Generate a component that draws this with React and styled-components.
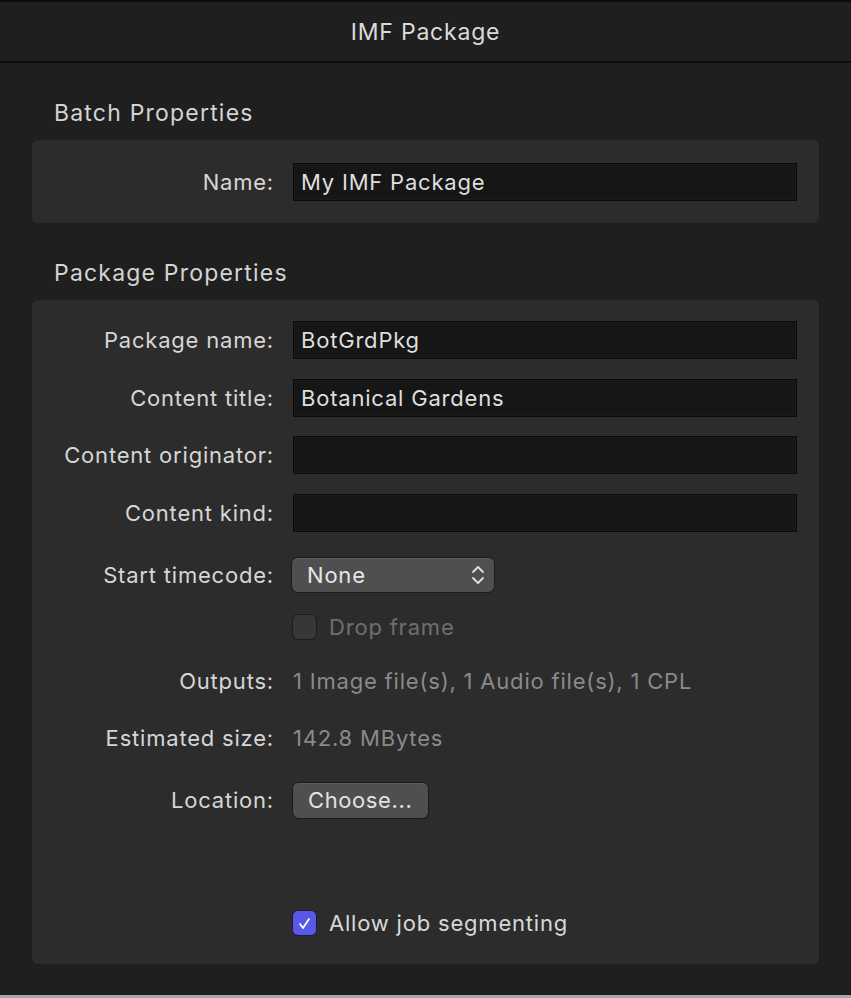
import React from "react";
import styled, { createGlobalStyle } from "styled-components";

const Global = createGlobalStyle`
  html, body { margin: 0; padding: 0; background: #1f1f1f; }
  * { box-sizing: border-box; }
  body { font-family: Inter, "Noto Sans", "Liberation Sans", sans-serif; }
`;

const Window = styled.div`
  width: 851px;
  height: 998px;
  background: #1f1f1f;
  display: flex;
  flex-direction: column;
  border-bottom: 3px solid #a6a6a6;
  color: #d9d9d9;
`;

const TitleBar = styled.div`
  height: 63px;
  border-top: 2px solid #0c0c0c;
  border-bottom: 2px solid #0c0c0c;
  display: flex;
  align-items: center;
  justify-content: center;
  font-size: 23px;
  letter-spacing: 0.8px;
  color: #dadada;
`;

const Content = styled.div`
  padding: 0 32px;
  display: flex;
  flex-direction: column;
`;

const SectionHeader = styled.div`
  height: 28px;
  margin-top: 36px;
  margin-bottom: 13px;
  padding-left: 22px;
  display: flex;
  align-items: center;
  font-size: 23px;
  letter-spacing: 1.2px;
  color: #d4d4d4;
`;

const Box = styled.div`
  background: #2c2c2c;
  border-radius: 6px;
  padding: ${(p) => p.$pt}px 22px ${(p) => p.$pb}px 0;
  display: flex;
  flex-direction: column;
`;

const Row = styled.div`
  display: grid;
  grid-template-columns: 242px 1fr;
  column-gap: 19px;
  align-items: center;
  height: 38px;
  margin-top: ${(p) => p.$mt || 0}px;
`;

const Label = styled.div`
  text-align: right;
  font-size: 22px;
  letter-spacing: 0.8px;
  color: #d6d6d6;
  white-space: nowrap;
`;

const Input = styled.div`
  height: 38px;
  background: #161616;
  border: 1px solid #0a0a0a;
  box-shadow: inset 0 0 0 1px #1b1b1b;
  display: flex;
  align-items: center;
  padding-left: 7px;
  font-size: 22px;
  letter-spacing: 0.8px;
  color: #dedede;
  white-space: nowrap;
`;

const Popup = styled.div`
  width: 202px;
  height: 34px;
  margin-left: -1px;
  background: #4f4f4f;
  border-radius: 6px;
  box-shadow: 0 0 0 1px #1c1c1c, inset 0 1px 0 #5c5c5c;
  display: flex;
  align-items: center;
  justify-content: space-between;
  padding: 0 8px 0 15px;
  font-size: 22px;
  letter-spacing: 0.8px;
  color: #e6e6e6;
`;

const CheckRow = styled.div`
  display: flex;
  align-items: center;
  gap: 13px;
  font-size: 22px;
  letter-spacing: 0.8px;
  white-space: nowrap;
  color: ${(p) => (p.$disabled ? "#6f6f6f" : "#d8d8d8")};
`;

const CheckBox = styled.div`
  width: 23px;
  height: 24px;
  border-radius: 5px;
  display: flex;
  align-items: center;
  justify-content: center;
  background: ${(p) => (p.$checked ? "#5a58e6" : "#373737")};
  box-shadow: 0 0 0 1px ${(p) => (p.$checked ? "#1d1d3a" : "#1c1c1c")};
`;

const Value = styled.div`
  font-size: 22px;
  letter-spacing: 0.8px;
  color: #8a8a8a;
  white-space: nowrap;
`;

const Button = styled.div`
  width: 135px;
  height: 35px;
  background: #4f4f4f;
  border-radius: 6px;
  box-shadow: 0 0 0 1px #1a1a1a, inset 0 1px 0 #5c5c5c;
  display: flex;
  align-items: center;
  padding-left: 15px;
  font-size: 22px;
  letter-spacing: 0.6px;
  color: #e2e2e2;
  white-space: nowrap;
`;

const Chevrons = () => (
  <svg width="16" height="22" viewBox="0 0 16 22" fill="none">
    <path d="M3 8 L8 3 L13 8" stroke="#e0e0e0" strokeWidth="1.8" strokeLinecap="round" strokeLinejoin="round" />
    <path d="M3 14 L8 19 L13 14" stroke="#e0e0e0" strokeWidth="1.8" strokeLinecap="round" strokeLinejoin="round" />
  </svg>
);

const Check = () => (
  <svg width="15" height="15" viewBox="0 0 15 15" fill="none">
    <path d="M3 8 L6 12 L12 3" stroke="#ffffff" strokeWidth="1.8" strokeLinecap="round" strokeLinejoin="round" />
  </svg>
);

export default function App() {
  return (
    <>
      <Global />
      <Window>
        <TitleBar>IMF Package</TitleBar>
        <Content>
          <SectionHeader>Batch Properties</SectionHeader>
          <Box $pt={23} $pb={22}>
            <Row>
              <Label>Name:</Label>
              <Input>My IMF Package</Input>
            </Row>
          </Box>

          <SectionHeader>Package Properties</SectionHeader>
          <Box $pt={21} $pb={22}>
            <Row>
              <Label>Package name:</Label>
              <Input>BotGrdPkg</Input>
            </Row>
            <Row $mt={20}>
              <Label>Content title:</Label>
              <Input>Botanical Gardens</Input>
            </Row>
            <Row $mt={19}>
              <Label>Content originator:</Label>
              <Input />
            </Row>
            <Row $mt={20}>
              <Label>Content kind:</Label>
              <Input />
            </Row>
            <Row $mt={24}>
              <Label>Start timecode:</Label>
              <Popup>
                <span>None</span>
                <Chevrons />
              </Popup>
            </Row>
            <Row $mt={14}>
              <span />
              <CheckRow $disabled>
                <CheckBox />
                <span>Drop frame</span>
              </CheckRow>
            </Row>
            <Row $mt={16}>
              <Label>Outputs:</Label>
              <Value>1 Image file(s), 1 Audio file(s), 1 CPL</Value>
            </Row>
            <Row $mt={19}>
              <Label>Estimated size:</Label>
              <Value>142.8 MBytes</Value>
            </Row>
            <Row $mt={24}>
              <Label>Location:</Label>
              <Button>Choose...</Button>
            </Row>
            <Row $mt={85}>
              <span />
              <CheckRow>
                <CheckBox $checked>
                  <Check />
                </CheckBox>
                <span>Allow job segmenting</span>
              </CheckRow>
            </Row>
          </Box>
        </Content>
      </Window>
    </>
  );
}
